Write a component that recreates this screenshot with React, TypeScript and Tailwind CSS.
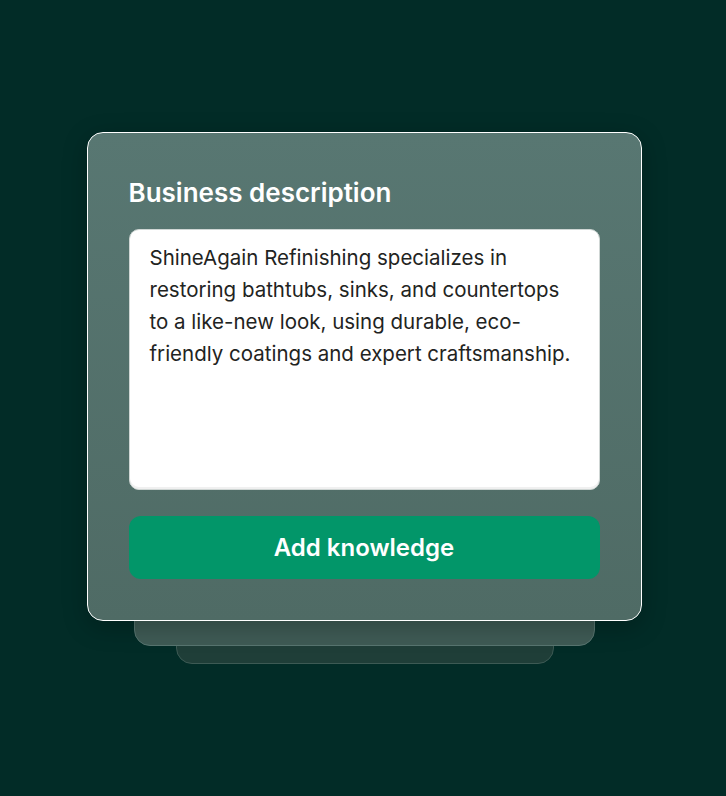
import React from 'react';

const description =
  'ShineAgain Refinishing specializes in restoring bathtubs, sinks, and countertops to a like-new look, using durable, eco-friendly coatings and expert craftsmanship.';

const App = () => {
  return (
    <div
      className="min-h-[796px] w-full bg-[#022c27] pt-[132px]"
      style={{ fontFamily: 'Inter, "Noto Sans", sans-serif' }}
    >
      <div className="relative mx-auto w-[555px] translate-x-[1px]">
        {/* stacked layers behind the card */}
        <div className="absolute left-[89px] right-[88px] top-[40px] h-[492px] rounded-2xl border border-[#3d5a54] bg-[#1f3e38]" />
        <div className="absolute left-[47px] right-[47px] top-[20px] h-[494px] rounded-2xl border border-[#587570] bg-[#3f5b55]" />

        <div className="relative rounded-2xl border-[1.5px] border-white bg-gradient-to-b from-[#587772] to-[#4f6b65] px-[41px] pt-[44px] pb-[41px] shadow-[0_6px_24px_rgba(0,0,0,0.25)]">
          <h2 className="text-[26px] font-semibold leading-8 text-white">Business description</h2>

          <div className="mt-[20px] h-[261px] rounded-[10px] border border-[#cfd6d4] bg-white px-[20px] pt-[12px] shadow-[inset_0_-2px_0_rgba(0,0,0,0.06)]">
            <p className="text-[20.5px] leading-[32px] text-[#1f2422]">{description}</p>
          </div>

          <button className="mt-[26px] flex h-[63px] w-full items-center justify-center rounded-xl bg-[#029669] text-[24px] font-semibold text-white">
            Add knowledge
          </button>
        </div>
      </div>
    </div>
  );
};

export default App;
